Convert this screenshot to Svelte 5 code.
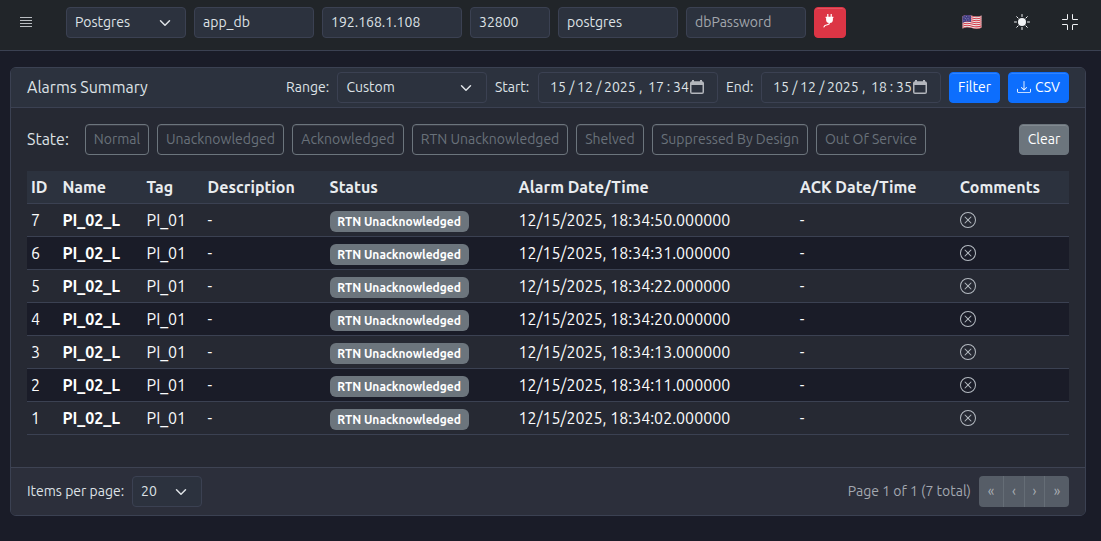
<script>
  const fields = [
    { text: 'app_db', cls: 'w120' },
    { text: '192.168.1.108', cls: 'w140' },
    { text: '32800', cls: 'w80' },
    { text: 'postgres', cls: 'w120' },
    { text: 'dbPassword', cls: 'w120 muted' },
  ];
  const states = [
    ['Normal', 's1'], ['Unacknowledged', 's2'], ['Acknowledged', 's3'], ['RTN Unacknowledged', 's4'],
    ['Shelved', 's5'], ['Suppressed By Design', 's6'], ['Out Of Service', 's7'],
  ];
  const heads = ['ID', 'Name', 'Tag', 'Description', 'Status', 'Alarm Date/Time', 'ACK Date/Time', 'Comments'];
  const rows = [[7, '50'], [6, '31'], [5, '22'], [4, '20'], [3, '13'], [2, '11'], [1, '02']];
</script>

{#snippet chevron()}
  <svg class="chev" width="16" height="12" viewBox="0 0 16 16" fill="none" stroke="#dee2e6" stroke-width="2" stroke-linecap="round" stroke-linejoin="round"><path d="m2 5 6 6 6-6" /></svg>
{/snippet}

{#snippet datetime(hour, minute)}
  <div class="control date">
    <span><b class="two">15</b><b class="slash">/</b><b class="two">12</b><b class="slash">/</b><b class="year">2025</b><b class="comma">,</b><b class="two">{hour}</b><b class="colon">:</b><b class="minute">{minute}</b></span>
    <svg class="cal" width="14" height="14" viewBox="0 0 14 14"><path fill="#b3b6bc" fill-rule="evenodd" d="M2 0h2v1.300h6V0h2v1.300A2 2 0 0 1 14 3v9a2 2 0 0 1-2 2H2a2 2 0 0 1-2-2V3a2 2 0 0 1 2-1.700zM1.500 5v7.500h11V5z" /></svg>
  </div>
{/snippet}

<nav>
  <span class="burger"><i></i><i></i><i></i><i></i></span>
  <div class="control w120"><span>Postgres</span>{@render chevron()}</div>
  {#each fields as f}
    <div class="control {f.cls}"><span>{f.text}</span></div>
  {/each}
  <button class="btn danger" aria-label="Connect">
    <svg width="14" height="14" viewBox="0 0 14 14" fill="none"><path fill="#fff" d="M5.200 0h1.200v3H5.200zM8.600 0h1.200v3H8.600zM3.600 2.800h7.800v1.200h-.5v2A3.200 3.200 0 0 1 7.900 9H7.100A3.200 3.200 0 0 1 4.100 6V4h-.5z" /><path stroke="#fff" stroke-width="1.200" stroke-linecap="round" d="M7.500 8.500C7.500 11 6 10.500 4.200 11c-1.200.3-1.800.9-2.200 1.900" /></svg>
  </button>
  <div class="tools">
    <svg class="flag" width="20" height="16" viewBox="0 0 20 16">
      <clipPath id="fc"><path d="M.5 2.300C4 .2 7 .8 10 1.800s6 1.200 9.500-.4v12C16 15.300 13 15 10 14s-6-1.200-9.500.6z" /></clipPath>
      <g clip-path="url(#fc)">
        <path fill="#eee" d="M0 0h20v16H0z" />
        <g fill="none" stroke="#d33b48" stroke-width="1.050">
          {#each [0, 1, 2, 3, 4, 5, 6] as n}
            <path d="M0 2.400C4 .4 7 1 10 2s6 1.300 10-.6" transform="translate(0 {n * 2.03})" />
          {/each}
        </g>
        <path fill="#443f83" d="M0 0h9v8C6 7 3 7.200 0 9z" />
        <g fill="#c9c8df"><circle cx="2" cy="3" r=".4" /><circle cx="4.500" cy="2.500" r=".4" /><circle cx="7" cy="2.800" r=".4" /><circle cx="3.200" cy="4.500" r=".4" /><circle cx="6" cy="4.500" r=".4" /><circle cx="2" cy="6.300" r=".4" /><circle cx="4.500" cy="6" r=".4" /><circle cx="7" cy="6" r=".4" /></g>
      </g>
    </svg>
    <svg width="16" height="16" viewBox="0 0 16 16" fill="#f1f3f5"><circle cx="8" cy="8" r="4" /><path fill="none" stroke="#f1f3f5" stroke-linecap="round" d="M8 .5v2M8 13.500v2M.5 8h2M13.500 8h2M2.700 2.700l1.400 1.400M11.900 11.900l1.400 1.400M2.700 13.300l1.400-1.400M11.900 4.100l1.400-1.400" /></svg>
    <svg width="16" height="16" viewBox="0 0 16 16" fill="#f1f3f5"><path d="M5.500 0a.5.5 0 0 1 .5.500v4A1.500 1.500 0 0 1 4.500 6h-4a.5.5 0 0 1 0-1h4a.5.5 0 0 0 .5-.5v-4a.5.5 0 0 1 .5-.5m5 0a.5.5 0 0 1 .5.500v4a.5.5 0 0 0 .5.500h4a.5.5 0 0 1 0 1h-4A1.500 1.500 0 0 1 10 4.500v-4a.5.5 0 0 1 .5-.5M0 10.500a.5.5 0 0 1 .5-.5h4A1.500 1.500 0 0 1 6 11.500v4a.5.5 0 0 1-1 0v-4a.5.5 0 0 0-.5-.5h-4a.5.5 0 0 1-.5-.5m10 1a1.500 1.500 0 0 1 1.500-1.500h4a.5.5 0 0 1 0 1h-4a.5.5 0 0 0-.5.500v4a.5.5 0 0 1-1 0z" /></svg>
  </div>
</nav>

<main>
  <section class="card">
    <header>
      <span class="title">Alarms Summary</span>
      <span class="label l-range">Range:</span>
      <div class="control w150 custom"><span>Custom</span>{@render chevron()}</div>
      <span class="label l-start">Start:</span>
      {@render datetime('17', '34')}
      <span class="label l-end">End:</span>
      {@render datetime('18', '35')}
      <button class="btn primary filter"><span>Filter</span></button>
      <button class="btn primary csv">
        <svg width="14" height="14" viewBox="0 0 16 16" fill="currentColor"><path d="M.5 9.900a.5.5 0 0 1 .5.500v2.500a1 1 0 0 0 1 1h12a1 1 0 0 0 1-1v-2.500a.5.5 0 0 1 1 0v2.500a2 2 0 0 1-2 2H2a2 2 0 0 1-2-2v-2.500a.5.5 0 0 1 .5-.5" /><path d="M7.646 11.854a.5.5 0 0 0 .708 0l3-3a.5.5 0 0 0-.708-.708L8.500 10.293V1.500a.5.5 0 0 0-1 0v8.793L5.354 8.146a.5.5 0 1 0-.708.708z" /></svg>
        <span>CSV</span>
      </button>
    </header>

    <div class="body">
      <div class="states">
        <span class="state-label">State:</span>
        {#each states as [name, cls]}
          <button class="btn outline {cls}"><span>{name}</span></button>
        {/each}
        <button class="btn secondary"><span>Clear</span></button>
      </div>

      <div class="table">
        <div class="row head">
          {#each heads as h}<div>{h}</div>{/each}
        </div>
        {#each rows as [id, sec], i}
          <div class="row" class:dark={i % 2 === 1}>
            <div>{id}</div>
            <div class="name">PI_02_L</div>
            <div>PI_01</div>
            <div>-</div>
            <div><span class="badge">RTN Unacknowledged</span></div>
            <div>12/15/2025, 18:34:{sec}.000000</div>
            <div>-</div>
            <div><svg class="x" width="16" height="16" viewBox="0 0 16 16" fill="#b4bac1"><path d="M8 15A7 7 0 1 1 8 1a7 7 0 0 1 0 14m0 1A8 8 0 1 0 8 0a8 8 0 0 0 0 16" /><path d="M4.646 4.646a.5.5 0 0 1 .708 0L8 7.293l2.646-2.647a.5.5 0 0 1 .708.708L8.707 8l2.647 2.646a.5.5 0 0 1-.708.708L8 8.707l-2.646 2.647a.5.5 0 0 1-.708-.708L7.293 8 4.646 5.354a.5.5 0 0 1 0-.708" /></svg></div>
          </div>
        {/each}
      </div>
    </div>

    <footer>
      <span class="label items">Items per page:</span>
      <div class="control w70"><span>20</span>{@render chevron()}</div>
      <span class="label total">Page 1 of 1 (7 total)</span>
      <div class="pager"><button>«</button><button>‹</button><button>›</button><button>»</button></div>
    </footer>
  </section>
</main>

<style>
  :global(body) { background: #1a1c28; }
  :global(#app) { font-family: Ubuntu, "Noto Sans", sans-serif; font-size: 16px; line-height: 24px; color: #dee2e6; }
  * { box-sizing: border-box; }
  nav { height: 51px; display: flex; align-items: flex-start; gap: 8px; padding: 7px 23px 0 20px; background: #212529; border-bottom: 1px solid #3b4152; }
  .burger { width: 12px; margin: 10px 26px 0 0; display: flex; flex-direction: column; gap: 2px; }
  .burger i { height: 1px; background: #b9bdc1; }
  .control { height: 31px; flex: none; display: flex; align-items: center; padding: 0 12px 1px 8px; border: 1px solid #3b4152; border-radius: 4px; background: #2c323e; font-size: 14px; line-height: 21px; white-space: nowrap; }
  .chev { margin-left: auto; margin-top: 1px; }
  .w70 { width: 70px; }
  .w80 { width: 80px; }
  .w120 { width: 120px; }
  .w140 { width: 140px; }
  .w150 { width: 150px; }
  .custom { padding-left: 8.500px; }
  .muted { color: #a3a7ad; }
  .btn { height: 31px; flex: none; display: flex; align-items: center; justify-content: center; padding: 0 0 1px; border: 1px solid; border-radius: 4px; font: inherit; font-size: 14px; line-height: 21px; white-space: nowrap; color: #fff; box-shadow: inset 0 1px 0 rgba(255, 255, 255, .15); }
  .danger { width: 32px; background: #dc3545; border-color: #dc3545; }
  .danger svg { margin: -2px 2px 0 0; }
  .tools { margin: 7px 0 0 auto; display: flex; gap: 32px; align-items: center; }
  main { padding: 16px 15px 0 10px; }
  .card { height: 449px; display: flex; flex-direction: column; border: 1px solid #3b4152; border-radius: 6px; overflow: hidden; background: #262933; }
  header { height: 40px; flex: none; display: flex; align-items: flex-start; gap: 8px; padding: 4px 16px; background: #2c323e; border-bottom: 1px solid #3b4152; }
  .title { margin-right: auto; margin-top: 3px; }
  .label { margin-top: 5px; font-size: 14px; line-height: 21px; white-space: nowrap; }
  .l-range { width: 43px; }
  .l-start { width: 35px; }
  .l-end { width: 27px; }
  .date { width: 180px; padding: 0 13px 1px 11px; }
  .date span { display: flex; }
  .date b { font-weight: 400; }
  .date .two { width: 16px; }
  .date .slash { width: 11px; padding-left: 3.300px; }
  .date .year { width: 34px; }
  .date .comma { width: 10px; padding-left: 1px; }
  .date .colon { width: 9px; text-align: center; }
  .date .minute { width: 15px; }
  .cal { margin-left: auto; margin-top: -1px; }
  .primary { background: #0d6efd; border-color: #0d6efd; }
  .filter { width: 51px; }
  .csv { width: 61px; gap: 4px; }
  .body { flex: 1; padding: 16px 16px 0; }
  .states { display: flex; gap: 8px; height: 31px; margin-bottom: 16px; }
  .state-label { width: 50px; margin-top: 3px; }
  .outline { background: transparent; border-color: #6c757d; color: #69717a; box-shadow: inset 0 1px 0 rgba(255, 255, 255, .08); }
  .s1 { width: 64px; }
  .s2 { width: 127px; }
  .s3 { width: 112px; }
  .s4 { width: 156px; }
  .s5 { width: 68px; }
  .s6 { width: 156px; }
  .s7 { width: 110px; }
  .secondary { width: 50px; margin-left: auto; background: #6c757d; border-color: #6c757d; }
  .row { height: 33px; display: grid; grid-template-columns: 31.400px 84.200px 61px 122px 189px 281.200px 160px 1fr; border-bottom: 1px solid #3b4152; white-space: nowrap; color: #fafbfc; }
  .row > div { padding: 4px 4px 0; }
  .row.head { background: #2c323e; font-weight: 600; color: #e9ecef; }
  .dark { background: #1a1c28; }
  .row .name { font-weight: 700; color: #fff; }
  .badge { width: 139px; height: 21px; margin-top: 3px; display: flex; align-items: center; justify-content: center; border-radius: 6px; background: #6c757d; color: #fff; font-size: 12px; font-weight: 700; line-height: 12px; }
  .x { display: block; margin-top: 4px; }
  footer { height: 48px; flex: none; display: flex; align-items: flex-start; gap: 8px; padding: 8px 16px; background: #2c2f3b; border-top: 1px solid #3e4353; }
  .items { width: 97px; }
  .total { margin-left: auto; color: #a3a8b0; }
  .pager { width: 90px; height: 31px; display: grid; grid-template-columns: 25px 21px 20px 24px; border-radius: 4px; overflow: hidden; background: #565d67; }
  .pager button { padding: 0 0 1px; border: 0; border-right: 1px solid #656d76; background: none; color: #a9adb3; font: inherit; font-size: 14px; }
  .pager button:last-child { border-right: 0; }
</style>
